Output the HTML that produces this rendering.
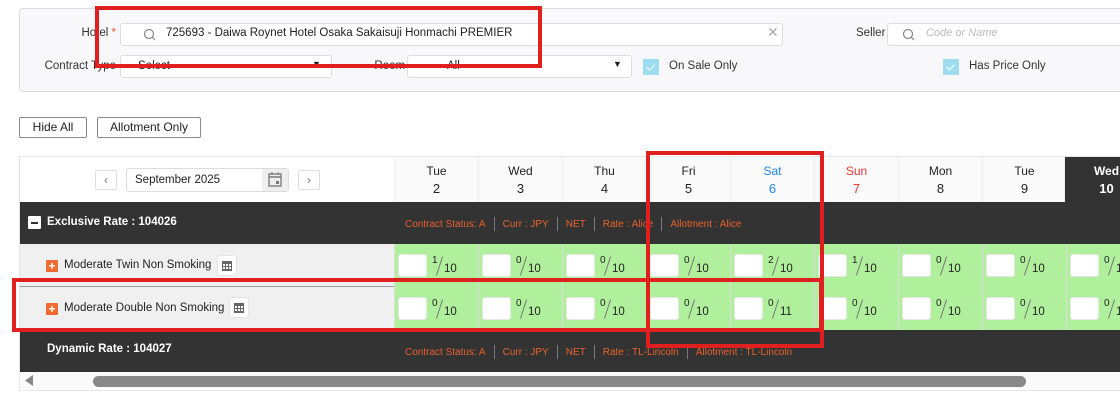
<!DOCTYPE html>
<html><head><meta charset="utf-8"><style>
*{box-sizing:border-box;margin:0;padding:0}
body{width:1120px;height:410px;background:#fff;font-family:"Liberation Sans",sans-serif;font-size:12px;color:#222;position:relative;overflow:hidden}
.a{position:absolute;white-space:nowrap}
.panel{left:19px;top:8px;width:1120px;height:84px;background:#f8f7fa;border:1px solid #ddd;border-radius:4px}
.inp{background:#fff;border:1px solid #ddd;border-radius:3px;height:23px}
.lbl{font-size:11.5px;color:#333}
.rl{text-align:right}
.cb{width:16px;height:16px;background:#9edcf2}
.cb:after{content:"";position:absolute;left:5px;top:3px;width:4px;height:7px;border:solid #fff;border-width:0 1.5px 1.5px 0;transform:rotate(45deg)}
.btn{height:21px;border:1px solid #888;border-radius:2px;background:#fff;font-size:12px;text-align:center;line-height:19px}
.hd{top:157px;height:45px;width:84px;text-align:center;font-size:12px;line-height:16px;padding-top:6px;background:#fafafa;border-left:1px solid #eee}
.hd b{display:block;font-weight:normal;font-size:13px;margin-top:2px}
.dark{background:#333}
.meta{color:#e8622a;font-size:10px}
.meta span{margin:0 8px}
.meta i{display:inline-block;width:1px;height:14px;background:#777;vertical-align:middle}
.cell{width:84px;height:43px;background:#b0ef9c;border-left:1px solid #ddd}
.cell .box{position:absolute;left:3px;top:10px;width:29px;height:23px;background:#fff;border-radius:3px;border:1px solid #e6e6e6}
.cell .n{position:absolute;left:37px;top:11px;font-size:10px}
.cell .sl{position:absolute;left:44px;top:12px;width:1px;height:20px;background:#777;transform:rotate(18deg)}
.cell .d{position:absolute;left:49px;top:19px;font-size:11.5px}
.red{border:4px solid #e0201f}
.plus{width:12px;height:12px;background:#f26a2f;border-radius:1px;color:#fff;font-size:12px;line-height:12px;text-align:center;font-weight:bold}
.calb{width:20px;height:21px;background:#fff;border:1px solid #e4e4e4;border-radius:3px}
</style></head><body>
<div class="a panel"></div>
<div class="a lbl rl" style="left:60px;width:56px;top:27px">Hotel <span style="color:#e53">*</span></div>
<div class="a inp" style="left:120px;top:23px;width:663px"></div>
<svg class="a" style="left:143px;top:28px" width="13" height="13"><circle cx="6" cy="6" r="4.5" fill="none" stroke="#888" stroke-width="1.2"/><line x1="9.3" y1="9.3" x2="12" y2="12" stroke="#888" stroke-width="1.2"/></svg>
<div class="a" style="left:166px;top:27px;font-size:11.5px">725693 - Daiwa Roynet Hotel Osaka Sakaisuji Honmachi PREMIER</div>
<div class="a" style="left:767px;top:24px;color:#aaa;font-size:14px">✕</div>
<div class="a lbl" style="left:856px;top:27px">Seller</div>
<div class="a inp" style="left:887px;top:23px;width:260px"></div>
<svg class="a" style="left:902px;top:28px" width="13" height="13"><circle cx="6" cy="6" r="4.5" fill="none" stroke="#888" stroke-width="1.2"/><line x1="9.3" y1="9.3" x2="12" y2="12" stroke="#888" stroke-width="1.2"/></svg>
<div class="a" style="left:926px;top:27px;font-size:11px;color:#bbb;font-style:italic">Code or Name</div>
<div class="a lbl rl" style="left:30px;width:86px;top:60px">Contract Type</div>
<div class="a inp" style="left:120px;top:55px;width:212px"></div>
<div class="a" style="left:138px;top:60px;font-size:11.5px">Select</div>
<div class="a" style="left:312px;top:59px;font-size:9px">▼</div>
<div class="a lbl rl" style="left:350px;width:83px;top:60px">Room Type</div>
<div class="a inp" style="left:407px;top:55px;width:225px"></div>
<div class="a" style="left:447px;top:60px;font-size:11.5px">All</div>
<div class="a" style="left:613px;top:59px;font-size:9px">▼</div>
<div class="a cb" style="left:643px;top:59px"></div>
<div class="a lbl" style="left:669px;top:60px">On Sale Only</div>
<div class="a cb" style="left:943px;top:59px"></div>
<div class="a lbl" style="left:969px;top:60px">Has Price Only</div>

<div class="a btn" style="left:19px;top:117px;width:68px">Hide All</div>
<div class="a btn" style="left:97px;top:117px;width:104px">Allotment Only</div>

<div class="a" style="left:19px;top:156px;width:1110px;height:235px;border:1px solid #e6e6e6"></div>
<div class="a" style="left:20px;top:157px;width:374px;height:45px;background:#fff"></div>
<div class="a btn" style="left:95px;top:170px;width:22px;height:20px;border-color:#ddd;color:#777;line-height:18px">‹</div>
<div class="a" style="left:126px;top:168px;width:163px;height:24px;border:1px solid #ddd;border-radius:3px;background:#fff"></div>
<div class="a" style="left:262px;top:169px;width:26px;height:22px;background:#eee"></div>
<svg class="a" style="left:268px;top:172px" width="14" height="15"><rect x="1" y="2" width="12" height="12" fill="none" stroke="#777" stroke-width="1.3"/><line x1="1" y1="5" x2="13" y2="5" stroke="#777" stroke-width="1.5"/><rect x="8" y="9" width="3" height="3" fill="#777"/><line x1="4" y1="0" x2="4" y2="3" stroke="#777"/><line x1="10" y1="0" x2="10" y2="3" stroke="#777"/></svg>
<div class="a" style="left:135px;top:174px;font-size:11.5px">September 2025</div>
<div class="a btn" style="left:298px;top:170px;width:22px;height:20px;border-color:#ddd;color:#777;line-height:18px">›</div>

<div class="a hd" style="left:394px">Tue<b>2</b></div>
<div class="a hd" style="left:478px">Wed<b>3</b></div>
<div class="a hd" style="left:562px">Thu<b>4</b></div>
<div class="a hd" style="left:646px">Fri<b>5</b></div>
<div class="a hd" style="left:730px;color:#1e88e5">Sat<b>6</b></div>
<div class="a hd" style="left:814px;color:#e53935">Sun<b>7</b></div>
<div class="a hd" style="left:898px">Mon<b>8</b></div>
<div class="a hd" style="left:982px">Tue<b>9</b></div>
<div class="a hd" style="left:1064px;background:#333;color:#fff;font-weight:bold">Wed<b style="font-weight:bold">10</b></div>

<div class="a dark" style="left:20px;top:202px;width:1100px;height:42px"></div>
<div class="a" style="left:28px;top:216px;width:13px;height:13px;background:#fff;border-radius:1px"><div style="margin:6px 3px;height:1.5px;background:#333"></div></div>
<div class="a" style="left:47px;top:216px;color:#fff;font-weight:bold;font-size:11.5px">Exclusive Rate : 104026</div>
<div class="a meta" style="left:397px;top:217px"><span style="margin-left:8px">Contract Status: A</span><i></i><span>Curr : JPY</span><i></i><span>NET</span><i></i><span>Rate : Alice</span><i></i><span>Allotment : Alice</span></div>

<div class="a" style="left:20px;top:244px;width:374px;height:86px;background:#f0f0f0"></div>
<div class="a" style="left:20px;top:286px;width:1100px;height:1px;background:#999"></div>
<div class="a plus" style="left:46px;top:260px">+</div>
<div class="a" style="left:64px;top:259px;font-size:11.5px">Moderate Twin Non Smoking</div>
<div class="a calb" style="left:217px;top:255px"></div>
<div class="a plus" style="left:46px;top:303px">+</div>
<div class="a" style="left:64px;top:302px;font-size:11.5px">Moderate Double Non Smoking</div>
<div class="a calb" style="left:229px;top:297px"></div>
<svg class="a" style="left:222px;top:260px" width="10" height="11"><rect x="0" y="1" width="10" height="10" fill="#666"/><g fill="#fff"><rect x="1" y="4" width="2" height="2"/><rect x="4" y="4" width="2" height="2"/><rect x="7" y="4" width="2" height="2"/><rect x="1" y="7" width="2" height="2"/><rect x="4" y="7" width="2" height="2"/><rect x="7" y="7" width="2" height="2"/></g></svg>
<svg class="a" style="left:234px;top:302px" width="10" height="11"><rect x="0" y="1" width="10" height="10" fill="#666"/><g fill="#fff"><rect x="1" y="4" width="2" height="2"/><rect x="4" y="4" width="2" height="2"/><rect x="7" y="4" width="2" height="2"/><rect x="1" y="7" width="2" height="2"/><rect x="4" y="7" width="2" height="2"/><rect x="7" y="7" width="2" height="2"/></g></svg>

<div class="a cell" style="left:394px;top:244px"><div class="box"></div><div class="n">1</div><div class="sl"></div><div class="d">10</div></div>
<div class="a cell" style="left:478px;top:244px"><div class="box"></div><div class="n">0</div><div class="sl"></div><div class="d">10</div></div>
<div class="a cell" style="left:562px;top:244px"><div class="box"></div><div class="n">0</div><div class="sl"></div><div class="d">10</div></div>
<div class="a cell" style="left:646px;top:244px"><div class="box"></div><div class="n">0</div><div class="sl"></div><div class="d">10</div></div>
<div class="a cell" style="left:730px;top:244px"><div class="box"></div><div class="n">2</div><div class="sl"></div><div class="d">10</div></div>
<div class="a cell" style="left:814px;top:244px"><div class="box"></div><div class="n">1</div><div class="sl"></div><div class="d">10</div></div>
<div class="a cell" style="left:898px;top:244px"><div class="box"></div><div class="n">0</div><div class="sl"></div><div class="d">10</div></div>
<div class="a cell" style="left:982px;top:244px"><div class="box"></div><div class="n">0</div><div class="sl"></div><div class="d">10</div></div>
<div class="a cell" style="left:1066px;top:244px"><div class="box"></div><div class="n">0</div><div class="sl"></div><div class="d">10</div></div>

<div class="a cell" style="left:394px;top:287px"><div class="box"></div><div class="n">0</div><div class="sl"></div><div class="d">10</div></div>
<div class="a cell" style="left:478px;top:287px"><div class="box"></div><div class="n">0</div><div class="sl"></div><div class="d">10</div></div>
<div class="a cell" style="left:562px;top:287px"><div class="box"></div><div class="n">0</div><div class="sl"></div><div class="d">10</div></div>
<div class="a cell" style="left:646px;top:287px"><div class="box"></div><div class="n">0</div><div class="sl"></div><div class="d">10</div></div>
<div class="a cell" style="left:730px;top:287px"><div class="box"></div><div class="n">0</div><div class="sl"></div><div class="d">11</div></div>
<div class="a cell" style="left:814px;top:287px"><div class="box"></div><div class="n">0</div><div class="sl"></div><div class="d">10</div></div>
<div class="a cell" style="left:898px;top:287px"><div class="box"></div><div class="n">0</div><div class="sl"></div><div class="d">10</div></div>
<div class="a cell" style="left:982px;top:287px"><div class="box"></div><div class="n">0</div><div class="sl"></div><div class="d">10</div></div>
<div class="a cell" style="left:1066px;top:287px"><div class="box"></div><div class="n">0</div><div class="sl"></div><div class="d">10</div></div>

<div class="a dark" style="left:20px;top:330px;width:1100px;height:42px"></div>
<div class="a" style="left:47px;top:343px;color:#fff;font-weight:bold;font-size:11.5px">Dynamic Rate : 104027</div>
<div class="a meta" style="left:397px;top:345px"><span style="margin-left:8px">Contract Status: A</span><i></i><span>Curr : JPY</span><i></i><span>NET</span><i></i><span>Rate : TL-Lincoln</span><i></i><span>Allotment : TL-Lincoln</span></div>

<div class="a" style="left:20px;top:372px;width:1100px;height:17px;background:#fafafa"></div>
<svg class="a" style="left:25px;top:375px" width="8" height="11"><path d="M8 0L0 5.5L8 11Z" fill="#888"/></svg>
<div class="a" style="left:93px;top:376px;width:933px;height:11px;background:#888;border-radius:6px"></div>

<div class="a red" style="left:95px;top:6px;width:447px;height:62px"></div>
<div class="a red" style="left:646px;top:151px;width:178px;height:197px"></div>
<div class="a red" style="left:12px;top:278px;width:811px;height:54px"></div>
</body></html>
